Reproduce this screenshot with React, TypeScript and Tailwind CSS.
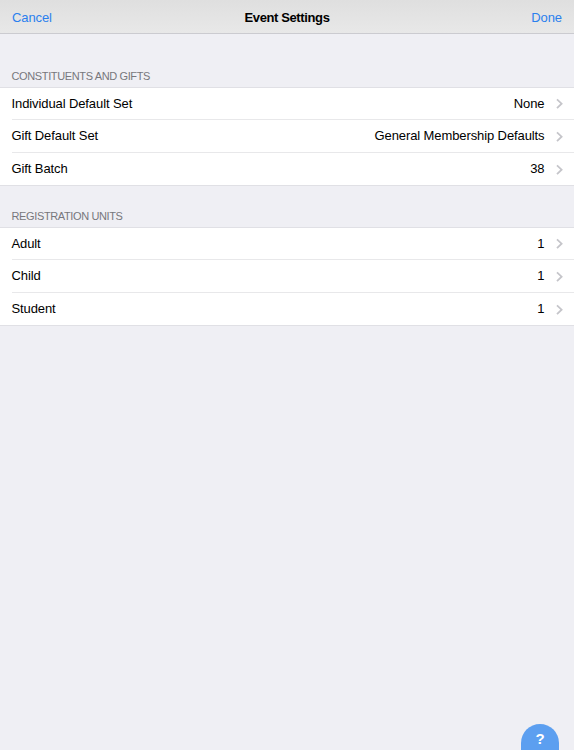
type SettingRow = {
  label: string
  value: string
}

const constituentRows: SettingRow[] = [
  { label: "Individual Default Set", value: "None" },
  { label: "Gift Default Set", value: "General Membership Defaults" },
  { label: "Gift Batch", value: "38" },
]

const unitRows: SettingRow[] = [
  { label: "Adult", value: "1" },
  { label: "Child", value: "1" },
  { label: "Student", value: "1" },
]

function Chevron() {
  return (
    <svg className="ml-[11px] h-[11px] w-[7px]" viewBox="0 0 7 11" fill="none" stroke="#c5c5ca" strokeWidth="1.8">
      <path d="M1 1.3 5.6 5.7 1 10.1" />
    </svg>
  )
}

function SettingsGroup({ title, rows }: { title: string; rows: SettingRow[] }) {
  return (
    <section>
      <h2 className="flex h-[22px] items-center px-[11.5px] text-[11px] tracking-[-0.37px] text-[#77777c]">{title}</h2>
      <ul className="border-y border-[#e0e0e5] bg-white pl-3">
        {rows.map((row) => (
          <li key={row.label} className="h-8 border-b border-[#e8e8ea] last:border-b-0 nth-2:h-[33px]">
            <button type="button" className="-ml-[0.5px] flex h-full w-full items-center pr-[11px] text-left">
              <span>{row.label}</span>
              <span className="ml-auto">{row.value}</span>
              <Chevron />
            </button>
          </li>
        ))}
      </ul>
    </section>
  )
}

export default function App() {
  return (
    <div className="flex h-screen flex-col overflow-hidden bg-[#efeff4] font-['Liberation_Sans',Arial,sans-serif] text-[13px] leading-4 tracking-[-0.1px] text-black">
      {/* Navigation bar */}
      <header className="grid h-[34px] grid-cols-3 items-center border-b border-[#cbcbd0] bg-linear-to-b from-[#dfdfdf] to-[#e8e8e8] px-3">
        <button type="button" className="pt-0.5 text-left text-[#2b80ee]">
          Cancel
        </button>
        <h1 className="pt-0.5 text-center font-bold tracking-[-0.38px]">Event Settings</h1>
        <button type="button" className="pt-0.5 text-right text-[#2b80ee]">
          Done
        </button>
      </header>

      <main className="flex flex-col gap-[19px] pt-[31px]">
        <SettingsGroup title="CONSTITUENTS AND GIFTS" rows={constituentRows} />
        <SettingsGroup title="REGISTRATION UNITS" rows={unitRows} />
      </main>

      {/* Help tab */}
      <button
        type="button"
        className="mt-auto mr-[15px] flex h-[26px] w-[38px] items-center justify-center self-end rounded-t-[19px] bg-[#5c9ff0] pt-1 text-[15px] font-bold text-white"
      >
        ?
      </button>
    </div>
  )
}
